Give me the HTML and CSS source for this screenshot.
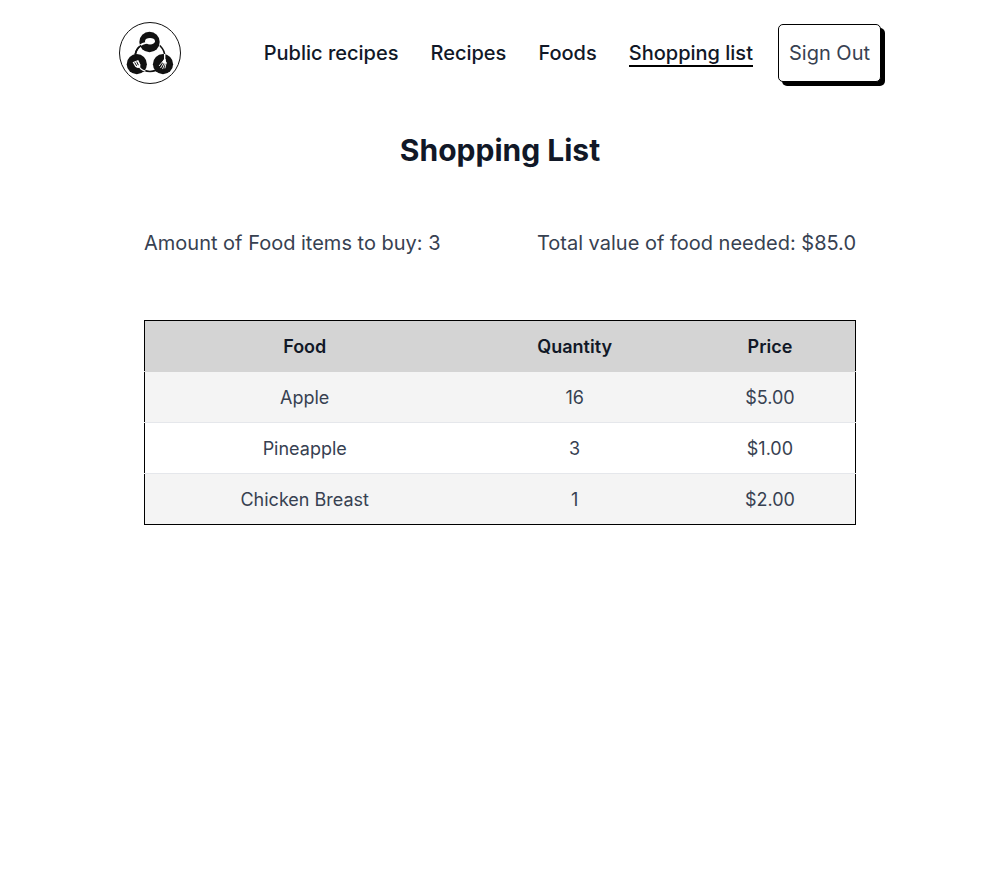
FILE: index.html
```html
<!DOCTYPE html>
<html lang="en">
<head>
  <meta charset="utf-8">
  <meta name="viewport" content="width=device-width, initial-scale=1">
  <title>Shopping List</title>
  <link rel="stylesheet" href="styles.css">
</head>
<body>
  <header class="site-header">
    <a class="logo" href="#" aria-label="Home">
      <svg class="logo-mark" viewBox="0 0 62 62" aria-hidden="true">
        <circle cx="31" cy="31" r="30.5" fill="#fff" stroke="#111" stroke-width="1"/>
        <circle cx="31" cy="34.7" r="14.8" fill="none" stroke="#111" stroke-width="1.6"/>
        <circle cx="30.5" cy="20" r="10.8" fill="#fff"/>
        <g fill="#111">
          <circle cx="30.5" cy="20" r="10.2"/>
          <circle cx="17.8" cy="42.2" r="10.1"/>
          <circle cx="44" cy="42.2" r="10.1"/>
        </g>
        <ellipse cx="31" cy="19.2" rx="5" ry="3.3" fill="#fff"/>
        <path d="M28 20.6C24.5 21 22.5 22 19.5 24.5" fill="none" stroke="#fff" stroke-width="1.8"/>
        <path d="M22.2 23.500C19 25.500 17 28.500 16.200 32.500" fill="none" stroke="#111" stroke-width="1.6"/>
        <path d="M13.600 40.200L19.200 38L21.400 42.500Q21.800 45 20 45.700Q18 46.400 16.300 44.800Z" fill="#fff"/>
        <path d="M20 44.500L22 47Q23.500 48.500 26.500 49" fill="none" stroke="#fff" stroke-width="1.2"/>
        <path d="M15.700 40.400L17.700 43.900M17.700 39.600L19.400 43.200" stroke="#111" stroke-width="1"/>
        <path d="M45.7 32V38.5" stroke="#fff" stroke-width="1.4"/>
        <path d="M44.5 38.500L40.3 43.7M45.6 39L41.700 45.700M46.300 40L43.700 46.700M47.200 40.500L46 46" fill="none" stroke="#fff" stroke-width="0.900" stroke-linecap="round"/>
        <path d="M45 37L43 40.500L47.500 42L46.600 37Z" fill="#fff"/>
      </svg>
    </a>
    <div class="header-actions">
      <nav class="site-nav" aria-label="Main">
        <a class="nav-link" href="#">Public recipes</a>
        <a class="nav-link" href="#">Recipes</a>
        <a class="nav-link" href="#">Foods</a>
        <a class="nav-link nav-link-active" href="#" aria-current="page">Shopping list</a>
      </nav>
      <button class="sign-out" type="button">Sign Out</button>
    </div>
  </header>
  <main class="content">
    <h1 class="page-title">Shopping List</h1>
    <div class="summary">
      <p class="summary-item">Amount of Food items to buy: 3</p>
      <p class="summary-item">Total value of food needed: $85.0</p>
    </div>
    <table class="food-table">
      <colgroup>
        <col class="col-food">
        <col class="col-quantity">
        <col class="col-price">
      </colgroup>
      <thead>
        <tr><th scope="col">Food</th><th scope="col">Quantity</th><th scope="col">Price</th></tr>
      </thead>
      <tbody>
        <tr><td>Apple</td><td>16</td><td>$5.00</td></tr>
        <tr><td>Pineapple</td><td>3</td><td>$1.00</td></tr>
        <tr><td>Chicken Breast</td><td>1</td><td>$2.00</td></tr>
      </tbody>
    </table>
  </main>
</body>
</html>
```
FILE: styles.css
```css
* {
  box-sizing: border-box;
}

body {
  margin: 0;
  background: #fff;
  color: #374151;
  font-family: Inter, "Liberation Sans", sans-serif;
  font-size: 20px;
  line-height: 24px;
}

.site-header {
  display: flex;
  align-items: center;
  justify-content: space-between;
  max-width: 762px;
  margin: 0 auto;
  padding: 22px 0;
}

.logo {
  display: block;
}

.logo-mark {
  display: block;
  width: 62px;
  height: 62px;
}

.header-actions {
  display: flex;
  align-items: center;
  gap: 25px;
}

.site-nav {
  display: flex;
  gap: 32px;
}

.nav-link {
  border: solid transparent;
  border-width: 2px 0;
  color: #111827;
  font-weight: 500;
  text-decoration: none;
}

.nav-link-active {
  border-bottom-color: #000;
}

.sign-out {
  padding: 16px 10px;
  border: 1px solid #000;
  border-radius: 5px;
  background: #fff;
  box-shadow: 4px 4px 0 #000;
  color: #374151;
  font: inherit;
  cursor: pointer;
}

.content {
  max-width: 762px;
  margin: 0 auto;
  padding: 26px 25px;
}

.page-title {
  margin: 0;
  color: #111827;
  font-size: 30px;
  font-weight: 700;
  line-height: 36px;
  text-align: center;
}

.summary {
  display: flex;
  justify-content: space-between;
  margin: 63px 0 65px;
}

.summary-item {
  margin: 0;
}

.food-table {
  width: 100%;
  border: 1px solid #000;
  border-collapse: collapse;
  table-layout: fixed;
  font-size: 18px;
  text-align: center;
}

.col-food {
  width: 45%;
}

.col-quantity {
  width: 31%;
}

.col-price {
  width: 24%;
}

.food-table th,
.food-table td {
  padding: 14px 8px 12px;
}

.food-table th {
  color: #111827;
  font-weight: 600;
}

.food-table thead tr {
  border-bottom: 1px solid #d4d4d4;
  background: #d4d4d4;
}

.food-table tbody tr + tr {
  border-top: 1px solid #e5e7eb;
}

.food-table tbody tr:nth-child(odd) {
  background: #f4f4f4;
}
```
